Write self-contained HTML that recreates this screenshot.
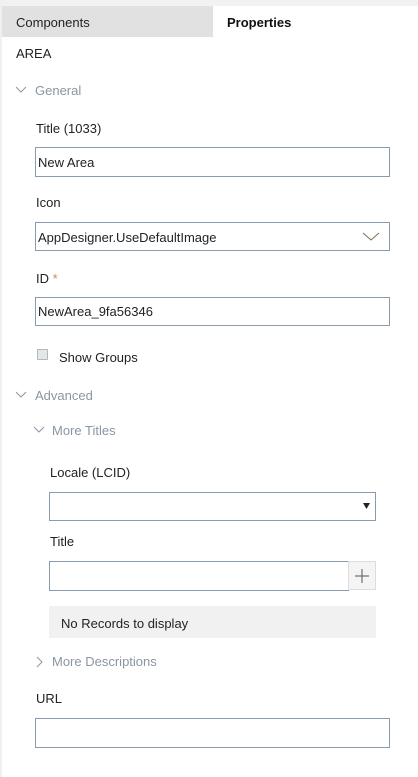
<!DOCTYPE html>
<html><head><meta charset="utf-8"><style>
*{margin:0;padding:0;box-sizing:border-box}
body{width:418px;height:777px;background:#fff;position:relative;overflow:hidden;font-family:"Liberation Sans",sans-serif;font-size:13px;color:#222}
.a{position:absolute;white-space:nowrap;line-height:16px;margin-top:1px}
.box{position:absolute;border:1px solid #8a9bab;background:#fff}
.g{color:#8a96a3}
svg{position:absolute}
</style></head><body>
<div style="position:absolute;left:0;top:0;width:418px;height:6px;background:#f2f2f2"></div>
<div style="position:absolute;left:0;top:0;width:2px;height:777px;background:#f0f0f0"></div>
<div style="position:absolute;left:2px;top:6px;width:211px;height:31px;background:#e1e1e1"></div>
<div class="a" style="left:16px;top:14px">Components</div>
<div class="a" style="left:227px;top:14px;font-weight:bold;color:#111;font-size:13px">Properties</div>
<div class="a" style="left:16px;top:45px">AREA</div>
<svg style="left:15px;top:86px" width="12" height="8"><path d="M1 1L6 6L11 1" stroke="#8a96a3" fill="none"/></svg>
<div class="a g" style="left:35px;top:82px">General</div>
<div class="a" style="left:36px;top:120px">Title (1033)</div>
<div class="box" style="left:35px;top:147px;width:355px;height:30px"></div>
<div class="a" style="left:38px;top:154px">New Area</div>
<div class="a" style="left:36px;top:194px">Icon</div>
<div class="box" style="left:35px;top:222px;width:355px;height:29px"></div>
<div class="a" style="left:38px;top:229px">AppDesigner.UseDefaultImage</div>
<svg style="left:362px;top:232px" width="18" height="10"><path d="M1 1L9 8L17 1" stroke="#7a6a50" fill="none"/></svg>
<div class="a" style="left:36px;top:270px">ID <span style="color:#d98a3a">*</span></div>
<div class="box" style="left:35px;top:297px;width:355px;height:29px"></div>
<div class="a" style="left:38px;top:303px">NewArea_9fa56346</div>
<div style="position:absolute;left:37px;top:349px;width:11px;height:11px;border:1px solid #b0b8c0;background:#e4e6e8;border-radius:1px"></div>
<div class="a" style="left:59px;top:349px">Show Groups</div>
<svg style="left:15px;top:391px" width="12" height="8"><path d="M1 1L6 6L11 1" stroke="#8a96a3" fill="none"/></svg>
<div class="a g" style="left:35px;top:387px">Advanced</div>
<svg style="left:33px;top:426px" width="12" height="8"><path d="M1 1L6 6L11 1" stroke="#8a96a3" fill="none"/></svg>
<div class="a g" style="left:52px;top:422px">More Titles</div>
<div class="a" style="left:50px;top:464px">Locale (LCID)</div>
<div class="box" style="left:49px;top:492px;width:327px;height:29px"></div>
<svg style="left:363px;top:503px" width="8" height="6"><path d="M0 0H7L3.5 6Z" fill="#222"/></svg>
<div class="a" style="left:50px;top:533px">Title</div>
<div class="box" style="left:49px;top:561px;width:300px;height:30px"></div>
<div style="position:absolute;left:348px;top:561px;width:28px;height:29px;border:1px solid #ddd;background:#f4f4f4"></div>
<svg style="left:354px;top:568px" width="16" height="16"><path d="M8 1V15M1 8H15" stroke="#555" fill="none"/></svg>
<div style="position:absolute;left:49px;top:606px;width:327px;height:32px;background:#f1f1f1"></div>
<div class="a" style="left:61px;top:615px">No Records to display</div>
<svg style="left:36px;top:656px" width="8" height="12"><path d="M1 1L6 6L1 11" stroke="#8a96a3" fill="none"/></svg>
<div class="a g" style="left:52px;top:653px">More Descriptions</div>
<div class="a" style="left:36px;top:690px">URL</div>
<div class="box" style="left:35px;top:718px;width:355px;height:30px"></div>
</body></html>
